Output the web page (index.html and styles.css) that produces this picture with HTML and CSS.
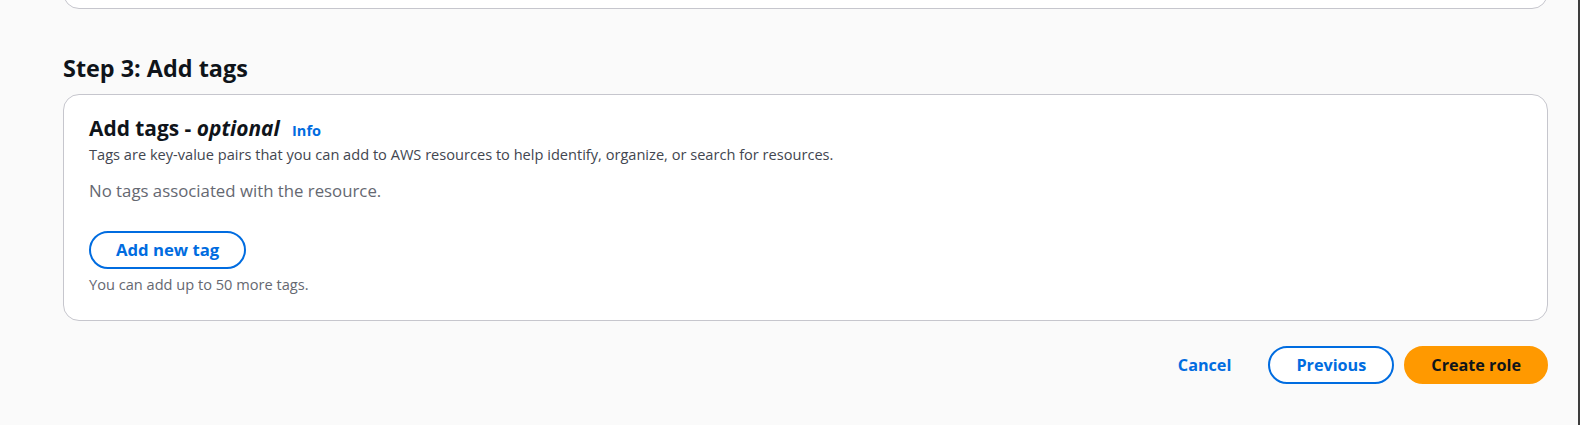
FILE: index.html
```html
<!DOCTYPE html>
<html lang="en">
<head>
<meta charset="utf-8">
<title>Create role - Step 3</title>
<link rel="stylesheet" href="styles.css">
</head>
<body>
<div class="app">
  <main class="main">
    <div class="prev-card"></div>

    <h1 class="step-title">Step 3: Add tags</h1>

    <section class="card">
      <h2 class="card-title">Add tags - <i>optional</i> <a class="info-link" href="#">Info</a></h2>
      <p class="card-desc">Tags are key-value pairs that you can add to AWS resources to help identify, organize, or search for resources.</p>
      <p class="empty-text">No tags associated with the resource.</p>
      <button class="btn btn-normal add-tag" type="button">Add new tag</button>
      <p class="hint">You can add up to 50 more tags.</p>
    </section>

    <div class="actions">
      <button class="btn btn-link" type="button">Cancel</button>
      <button class="btn btn-normal btn-wide" type="button">Previous</button>
      <button class="btn btn-primary" type="button">Create role</button>
    </div>
  </main>
  <div class="edge"></div>
</div>
</body>
</html>
```

FILE: styles.css
```css
* { box-sizing: border-box; }

html, body {
  margin: 0;
  padding: 0;
  height: 100%;
  overflow: hidden;
}

body {
  background: #fafafa;
  font-family: "Open Sans", "Noto Sans", sans-serif;
  color: #0f141a;
}

.app {
  display: flex;
  min-height: 100vh;
}

.main {
  flex: 1;
  padding: 0 30px 0 63px;
}

.edge {
  width: 2px;
  background: #3d3d3d;
}

.prev-card {
  height: 40px;
  margin-top: -31px;
  background: #ffffff;
  border: 1px solid #c6c6cd;
  border-radius: 16px;
}

.step-title {
  margin: 43.5px 0 11.5px;
  font-size: 23.4px;
  line-height: 30px;
  font-weight: 700;
  color: #0f141a;
}

.card {
  background: #ffffff;
  border: 1px solid #c6c6cd;
  border-radius: 16px;
  padding: 20px 25px 26px;
}

.card-title {
  margin: 0;
  font-size: 20.9px;
  line-height: 27px;
  font-weight: 700;
  color: #0f141a;
}

.card-title i {
  font-style: italic;
}

.info-link {
  margin-left: 7px;
  font-size: 14.5px;
  font-weight: 700;
  color: #006ce0;
  text-decoration: none;
}

.card-desc {
  margin: 0;
  font-size: 14.6px;
  line-height: 20px;
  color: #424650;
}

.empty-text {
  margin: 15px 0 0;
  font-size: 16.8px;
  line-height: 24px;
  color: #656871;
}

.hint {
  margin: 5px 0 0;
  font-size: 14.6px;
  line-height: 20px;
  color: #656871;
}

.btn {
  display: inline-block;
  height: 38px;
  padding: 0 25px;
  border: 2px solid transparent;
  border-radius: 20px;
  background: transparent;
  font-family: inherit;
  font-size: 16.2px;
  line-height: 34px;
  font-weight: 700;
  cursor: pointer;
}

.btn-normal {
  background: #ffffff;
  border-color: #006ce0;
  color: #006ce0;
}

.btn-wide {
  padding: 0 26px;
}

.add-tag {
  margin-top: 28px;
  font-size: 16.7px;
}

.btn-link {
  color: #006ce0;
}

.btn-primary {
  background: #ff9900;
  border-color: #ff9900;
  color: #0f141a;
}

.actions {
  display: flex;
  justify-content: flex-end;
  align-items: center;
  gap: 10px;
  margin-top: 25px;
}
```
